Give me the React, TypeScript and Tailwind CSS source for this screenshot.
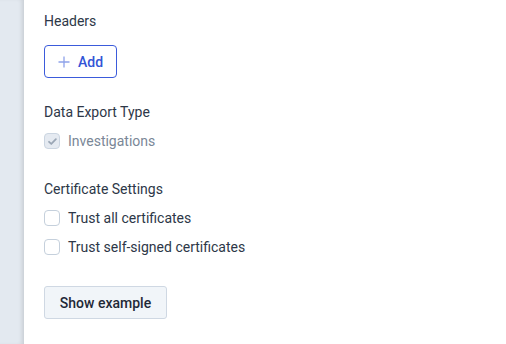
import React from "react";

function Box({ checked, disabled }: { checked?: boolean; disabled?: boolean }) {
  return (
    <span
      className={
        "flex h-4 w-4 shrink-0 items-center justify-center rounded-[4px] border " +
        (disabled ? "border-[#cbd5e1] bg-[#e5eaf1]" : "border-[#c5d0dc] bg-white")
      }
    >
      {checked && (
        <svg width="11" height="11" viewBox="0 0 12 12" fill="none">
          <path d="M2.2 6.3l2.5 2.4 5-5.2" stroke="#9aa6b5" strokeWidth="1.9" strokeLinecap="round" strokeLinejoin="round" />
        </svg>
      )}
    </span>
  );
}

export default function App() {
  return (
    <div className="flex h-[344px] w-[506px] bg-white" style={{ fontFamily: "Roboto, 'Liberation Sans', sans-serif" }}>
      <div className="w-[24px] shrink-0 bg-[#e3e9f0] shadow-[inset_-4px_0_4px_-2px_rgba(0,0,0,0.12)]" />
      <div className="flex flex-1 flex-col pl-[20px] pt-[11px] text-[14px] leading-[20px] text-[#2d3748]">
        <div>Headers</div>
        <button className="mt-[14px] flex h-[33px] w-[73px] items-center justify-center gap-[8px] rounded-[4px] border border-[#3b5bdb] bg-white font-medium text-[#3354d6]">
          <svg width="12" height="12" viewBox="0 0 12 12">
            <path d="M6 0.5v11M0.5 6h11" stroke="#8ea2ea" strokeWidth="1.3" />
          </svg>
          <span>Add</span>
        </button>
        <div className="mt-[24px]">Data Export Type</div>
        <label className="mt-[9px] flex items-center gap-[8px] text-[#7a8797]">
          <Box checked disabled />
          <span>Investigations</span>
        </label>
        <div className="mt-[28px]">Certificate Settings</div>
        <label className="mt-[9px] flex items-center gap-[8px]">
          <Box />
          <span>Trust all certificates</span>
        </label>
        <label className="mt-[9px] flex items-center gap-[8px]">
          <Box />
          <span>Trust self-signed certificates</span>
        </label>
        <button className="mt-[29px] flex h-[33px] w-[123px] items-center justify-center rounded-[3px] border border-[#cfd8e3] bg-[#f1f5f9] font-medium text-[#1f2937]">
          Show example
        </button>
      </div>
    </div>
  );
}
